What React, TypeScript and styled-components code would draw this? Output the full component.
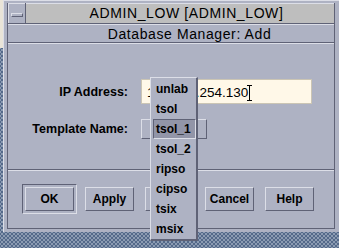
import React from "react";
import styled, { createGlobalStyle } from "styled-components";

const lavender = "#aeb2c3";
const light = "#dcdee7";
const dark = "#5f6276";

const GlobalStyle = createGlobalStyle`
  body {
    margin: 0;
    font-family: "Liberation Sans", Arial, sans-serif;
  }
`;

const Screen = styled.div`
  position: relative;
  display: flex;
  align-items: flex-start;
  width: 339px;
  height: 248px;
  overflow: hidden;
  background-color: #54698a;
  background-image: radial-gradient(circle, #8d9db4 0.7px, transparent 1px),
    radial-gradient(circle, #8d9db4 0.7px, transparent 1px);
  background-size: 4px 4px;
  background-position: 0 0, 2px 2px;
`;

const BackWindow = styled.div`
  width: 3px;
  height: 48px;
  flex-shrink: 0;
  background: #e9e4d8;
`;

const Frame = styled.div`
  width: 336px;
  height: 232px;
  flex-shrink: 0;
  box-sizing: border-box;
  padding: 3px 4px;
  background: ${lavender};
  box-shadow: inset 1px 1px 0 ${light};
`;

const Inner = styled.div`
  height: 100%;
  box-sizing: border-box;
  display: flex;
  flex-direction: column;
  border: 1px solid ${dark};
  border-top: none;
`;

const TitleRow = styled.div`
  display: flex;
  height: 21px;
  box-sizing: border-box;
  border-bottom: 1px solid ${dark};
`;

const MenuButton = styled.div`
  width: 18px;
  box-sizing: border-box;
  border-right: 1px solid ${dark};
  display: flex;
  align-items: center;
  justify-content: center;
  padding-top: 3px;
  background: ${lavender};
  box-shadow: inset 1px 1px 0 ${light};
`;

const MenuGlyph = styled.div`
  width: 12px;
  height: 4px;
  box-sizing: border-box;
  border: 1px solid;
  border-color: ${light} ${dark} ${dark} ${light};
  background: ${lavender};
`;

const TitleBar = styled.div`
  flex: 1;
  display: flex;
  align-items: center;
  justify-content: center;
  padding-left: 13px;
  background: #bebebe;
  box-shadow: inset 0 1px 0 ${light};
  font-size: 14px;
  letter-spacing: 0.6px;
  color: #000;
`;

const Subtitle = styled.div`
  height: 19px;
  box-sizing: border-box;
  border-top: 1px solid ${light};
  border-bottom: 1px solid ${dark};
  display: flex;
  align-items: center;
  justify-content: center;
  padding-left: 37px;
  font-size: 14px;
  letter-spacing: 0.6px;
  color: #000;
`;

const Body = styled.div`
  height: 126px;
  box-sizing: border-box;
  border-top: 1px solid ${light};
  display: grid;
  grid-template-columns: 120px auto;
  grid-auto-rows: min-content;
  column-gap: 13px;
  row-gap: 15px;
  align-items: center;
  padding-top: 35px;
`;

const Label = styled.div`
  text-align: right;
  font-size: 12.5px;
  font-weight: bold;
  color: #000;
`;

const Field = styled.div`
  width: 171px;
  height: 25px;
  box-sizing: border-box;
  border: 1px solid #cbc5b4;
  background: #fff8e8;
  display: flex;
  align-items: center;
  padding: 2px 0 0 5px;
  font-size: 13.5px;
  color: #000;
`;

const Caret = styled.span`
  display: inline-block;
  width: 5px;
  height: 16px;
  margin-left: -1px;
  background:
    linear-gradient(#000, #000) center / 1px 100% no-repeat,
    linear-gradient(#000, #000) top / 5px 1px no-repeat,
    linear-gradient(#000, #000) bottom / 5px 1px no-repeat;
`;

// option menu button; its label is covered by the popped-up list
const OptionButton = styled.div`
  width: 66px;
  height: 20px;
  box-sizing: border-box;
  border: 1px solid;
  border-color: ${light} ${dark} ${dark} ${light};
  display: flex;
  align-items: center;
  justify-content: flex-end;
  padding: 0 8px 0 4px;
`;

const OptionIndicator = styled.div`
  width: 9px;
  height: 5px;
  box-sizing: border-box;
  border: 1px solid;
  border-color: ${light} ${dark} ${dark} ${light};
`;

const ButtonArea = styled.div`
  flex: 1;
  border-top: 1px solid ${dark};
  box-shadow: inset 0 1px 0 ${light};
`;

const ButtonRow = styled.div`
  display: flex;
  gap: 5px;
  padding: 14px 0 0 14px;
`;

const ButtonSlot = styled.div<{ $default?: boolean }>`
  width: 55px;
  height: 30px;
  box-sizing: border-box;
  padding: 2px;
  border: 1px solid;
  border-color: ${(p) =>
    p.$default ? `${dark} ${light} ${light} ${dark}` : "transparent"};
`;

const PushButton = styled.div`
  width: 100%;
  height: 100%;
  box-sizing: border-box;
  border: 1px solid;
  border-color: ${light} ${dark} ${dark} ${light};
  background: ${lavender};
  display: flex;
  align-items: center;
  justify-content: center;
  font-size: 12px;
  font-weight: bold;
  color: #000;
`;

// popped-up option menu, lies over the form and buttons
const PopupMenu = styled.div`
  position: absolute;
  left: 150px;
  top: 77px;
  width: 48px;
  box-sizing: border-box;
  border-style: solid;
  border-width: 1px 2px 2px 1px;
  border-color: ${light} ${dark} ${dark} ${light};
  background: ${lavender};
  padding: 1px 0 0 2px;
`;

const MenuItem = styled.div<{ $selected?: boolean }>`
  height: 20px;
  width: 43px;
  box-sizing: border-box;
  border: 1px solid;
  border-color: ${(p) =>
    p.$selected ? `${dark} ${light} ${light} ${dark}` : "transparent"};
  background: ${(p) => (p.$selected ? "#9295a8" : "transparent")};
  padding-left: 2px;
  line-height: 18px;
  font-size: 12px;
  font-weight: bold;
  color: #000;
`;

const templates = ["unlab", "tsol", "tsol_1", "tsol_2", "ripso", "cipso", "tsix", "msix"];
// the third button sits under the popup, its label is not visible
const buttons = ["OK", "Apply", "", "Cancel", "Help"];

export default function App() {
  return (
    <Screen>
      <GlobalStyle />
      <BackWindow />
      <Frame>
        <Inner>
          <TitleRow>
            <MenuButton>
              <MenuGlyph />
            </MenuButton>
            <TitleBar>ADMIN_LOW [ADMIN_LOW]</TitleBar>
          </TitleRow>
          <Subtitle>Database Manager: Add</Subtitle>
          <Body>
            <Label>IP Address:</Label>
            <Field>
              129.150.254.130
              <Caret />
            </Field>
            <Label>Template Name:</Label>
            <OptionButton>
              <OptionIndicator />
            </OptionButton>
          </Body>
          <ButtonArea>
            <ButtonRow>
              {buttons.map((b, i) => (
                <ButtonSlot key={i} $default={b === "OK"}>
                  <PushButton>{b}</PushButton>
                </ButtonSlot>
              ))}
            </ButtonRow>
          </ButtonArea>
        </Inner>
      </Frame>
      <PopupMenu>
        {templates.map((t) => (
          <MenuItem key={t} $selected={t === "tsol_1"}>
            {t}
          </MenuItem>
        ))}
      </PopupMenu>
    </Screen>
  );
}
